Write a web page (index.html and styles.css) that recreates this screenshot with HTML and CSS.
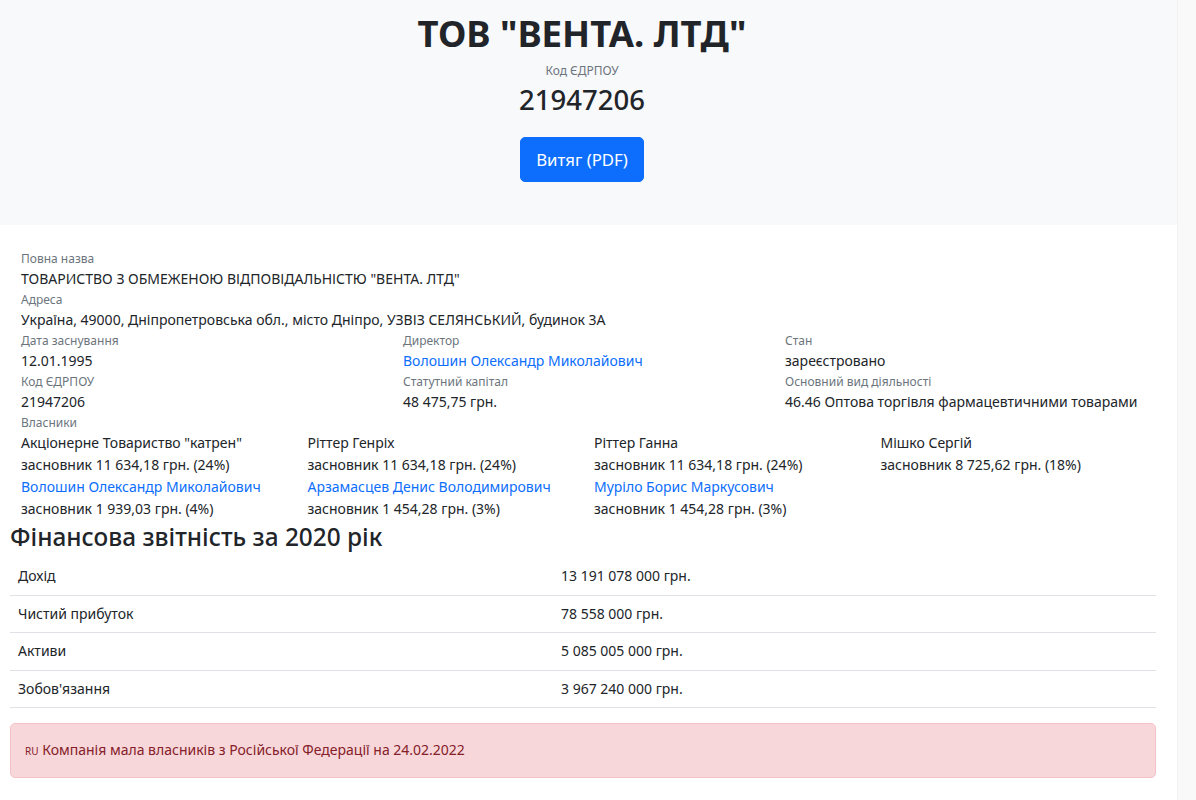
FILE: index.html
```html
<!DOCTYPE html>
<html lang="uk">
<head>
<meta charset="utf-8">
<title>ТОВ "ВЕНТА. ЛТД"</title>
<link rel="stylesheet" href="styles.css">
</head>
<body>
<div class="page">
  <header class="hero">
    <h1 class="hero-title">ТОВ "ВЕНТА. ЛТД"</h1>
    <div class="hero-label">Код ЄДРПОУ</div>
    <div class="hero-code">21947206</div>
    <a class="btn-primary" href="#">Витяг (PDF)</a>
  </header>

  <main class="content">
    <section class="info">
      <div class="field">
        <div class="label">Повна назва</div>
        <div class="value">ТОВАРИСТВО З ОБМЕЖЕНОЮ ВІДПОВІДАЛЬНІСТЮ "ВЕНТА. ЛТД"</div>
      </div>
      <div class="field">
        <div class="label">Адреса</div>
        <div class="value">Україна, 49000, Дніпропетровська обл., місто Дніпро, УЗВІЗ СЕЛЯНСЬКИЙ, будинок 3А</div>
      </div>
      <div class="grid3">
        <div class="field">
          <div class="label">Дата заснування</div>
          <div class="value">12.01.1995</div>
        </div>
        <div class="field">
          <div class="label">Директор</div>
          <div class="value"><a class="link" href="#">Волошин Олександр Миколайович</a></div>
        </div>
        <div class="field">
          <div class="label">Стан</div>
          <div class="value">зареєстровано</div>
        </div>
        <div class="field">
          <div class="label">Код ЄДРПОУ</div>
          <div class="value">21947206</div>
        </div>
        <div class="field">
          <div class="label">Статутний капітал</div>
          <div class="value">48 475,75 грн.</div>
        </div>
        <div class="field">
          <div class="label">Основний вид діяльності</div>
          <div class="value">46.46 Оптова торгівля фармацевтичними товарами</div>
        </div>
      </div>
      <div class="field">
        <div class="label">Власники</div>
      </div>
      <div class="owners">
        <div class="owner">
          <div class="owner-line">Акціонерне Товариство "катрен"</div>
          <div class="owner-line">засновник 11 634,18 грн. (24%)</div>
        </div>
        <div class="owner">
          <div class="owner-line">Ріттер Генріх</div>
          <div class="owner-line">засновник 11 634,18 грн. (24%)</div>
        </div>
        <div class="owner">
          <div class="owner-line">Ріттер Ганна</div>
          <div class="owner-line">засновник 11 634,18 грн. (24%)</div>
        </div>
        <div class="owner">
          <div class="owner-line">Мішко Сергій</div>
          <div class="owner-line">засновник 8 725,62 грн. (18%)</div>
        </div>
        <div class="owner">
          <div class="owner-line"><a class="link" href="#">Волошин Олександр Миколайович</a></div>
          <div class="owner-line">засновник 1 939,03 грн. (4%)</div>
        </div>
        <div class="owner">
          <div class="owner-line"><a class="link" href="#">Арзамасцев Денис Володимирович</a></div>
          <div class="owner-line">засновник 1 454,28 грн. (3%)</div>
        </div>
        <div class="owner">
          <div class="owner-line"><a class="link" href="#">Муріло Борис Маркусович</a></div>
          <div class="owner-line">засновник 1 454,28 грн. (3%)</div>
        </div>
      </div>
    </section>

    <h4 class="section-title">Фінансова звітність за 2020 рік</h4>
    <table class="fin-table">
      <tbody>
        <tr><td class="fin-name">Дохід</td><td>13 191 078 000 грн.</td></tr>
        <tr><td class="fin-name">Чистий прибуток</td><td>78 558 000 грн.</td></tr>
        <tr><td class="fin-name">Активи</td><td>5 085 005 000 грн.</td></tr>
        <tr><td class="fin-name">Зобов'язання</td><td>3 967 240 000 грн.</td></tr>
      </tbody>
    </table>

    <div class="alert"><span class="flag">RU</span> Компанія мала власників з Російської Федерації на 24.02.2022</div>
  </main>
</div>
<div class="scroll-track"></div>
</body>
</html>
```

FILE: styles.css
```css
html, body {
  margin: 0;
  padding: 0;
}
body {
  display: flex;
  min-height: 100vh;
  background: #ffffff;
  color: #212529;
  font-family: "Noto Sans", "Open Sans", sans-serif;
  font-size: 14px;
  line-height: 1.5;
}
.page {
  width: 1177px;
  flex: none;
}
.scroll-track {
  flex: 1;
  background: #f9f9f9;
  border-left: 1px solid #f2f2f2;
}

.hero {
  background: #f8f9fa;
  height: 225px;
  box-sizing: border-box;
  padding: 10px 13px 0 0;
  display: flex;
  flex-direction: column;
  align-items: center;
}
.hero-title {
  margin: 0;
  font-size: 36.5px;
  font-weight: 700;
  line-height: 46px;
}
.hero-label {
  margin-top: 6px;
  font-size: 12px;
  line-height: 18px;
  color: #6c757d;
}
.hero-code {
  margin-top: 3px;
  font-size: 27.5px;
  font-weight: 500;
  line-height: 34px;
}
.btn-primary {
  margin-top: 20px;
  display: inline-block;
  box-sizing: border-box;
  height: 45px;
  padding: 8px 15px;
  background: #0d6efd;
  border: 1px solid #0d6efd;
  border-radius: 5px;
  color: #fff;
  font-size: 16.8px;
  line-height: 27px;
  text-decoration: none;
}

.content {
  padding: 24px 21px 0 10px;
}
.field {
  padding-left: 11px;
}
.label {
  font-size: 12px;
  line-height: 19px;
  color: #6c757d;
}
.value {
  font-size: 14px;
  line-height: 22px;
}
.link {
  color: #0d6efd;
  text-decoration: none;
}
.grid3 {
  display: grid;
  grid-template-columns: repeat(3, 1fr);
}
.owners {
  display: grid;
  grid-template-columns: repeat(4, 1fr);
}
.owner {
  padding-left: 11px;
}
.owner-line {
  line-height: 22px;
}

.section-title {
  margin: 2px 0 7px;
  font-size: 24.4px;
  font-weight: 500;
  line-height: 29px;
}

.fin-table {
  width: 100%;
  border-collapse: collapse;
  margin-bottom: 15px;
}
.fin-table td {
  padding: 8px;
  line-height: 20.5px;
  border-bottom: 1px solid #dee2e6;
}
.fin-name {
  width: 527px;
}

.alert {
  background: #f8d7da;
  border: 1px solid #f5c2c7;
  border-radius: 5px;
  color: #842029;
  padding: 15px 14px;
  line-height: 21px;
}
.flag {
  font-size: 10px;
}
```
